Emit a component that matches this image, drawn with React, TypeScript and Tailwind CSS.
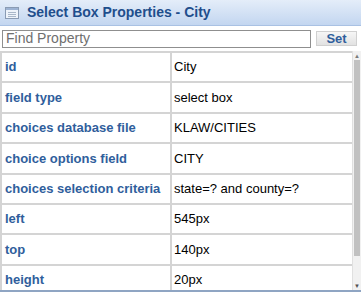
const rows: [string, string][] = [
  ['id', 'City'],
  ['field type', 'select box'],
  ['choices database file', 'KLAW/CITIES'],
  ['choice options field', 'CITY'],
  ['choices selection criteria', 'state=? and county=?'],
  ['left', '545px'],
  ['top', '140px'],
  ['height', '20px'],
]

function FormIcon() {
  return (
    <svg width="14" height="12" viewBox="0 0 14 12" className="shrink-0">
      <rect x="0.5" y="0.5" width="13" height="11" fill="#eef3fa" stroke="#8a9bb3" />
      <rect x="1" y="1" width="12" height="2" fill="#9db3d3" />
      <line x1="3" y1="5.5" x2="11" y2="5.5" stroke="#a9b7c9" />
      <line x1="3" y1="7.5" x2="11" y2="7.5" stroke="#a9b7c9" />
      <line x1="3" y1="9.5" x2="11" y2="9.5" stroke="#a9b7c9" />
    </svg>
  )
}

export default function App() {
  return (
    <div className="w-[361px] h-[292px] overflow-hidden bg-white font-['Liberation_Sans',Arial,sans-serif] flex flex-col">
      <div className="h-[26px] shrink-0 flex items-center gap-2 pl-[5px] bg-gradient-to-b from-[#e4edf9] to-[#c3d6f0] border-b border-[#a9c1e3]">
        <FormIcon />
        <span className="text-[14px] font-bold text-[#1f4e8c]">Select Box Properties - City</span>
      </div>
      <div className="h-[25px] shrink-0 flex items-center gap-[5px] pl-[2px] pr-[4px] bg-white">
        <input
          className="w-[309px] h-[18px] border border-[#8f8f8f] px-[3px] text-[14px] text-gray-800 placeholder:text-[#6f6f6f] outline-none"
          placeholder="Find Property"
        />
        <button className="w-[41px] h-[15px] flex items-center justify-center bg-gradient-to-b from-[#f6f6f6] to-[#e2e2e2] border border-[#d0d0d0] text-[13px] font-bold text-[#2f5e9c] leading-none">
          Set
        </button>
      </div>
      <div className="flex flex-1 min-h-0 border-b-2 border-[#8fa5c3]">
        <div className="flex-1 overflow-hidden border-t-2 border-l-2 border-[#d4d4d4]">
          {rows.map(([k, v]) => (
            <div key={k} className="flex h-[30.4px] border-b-2 border-[#d4d4d4]">
              <div className="w-[170px] shrink-0 flex items-center pl-[3px] border-r-2 border-[#d4d4d4] text-[13px] font-bold text-[#2f5e9c]">
                {k}
              </div>
              <div className="flex-1 flex items-center pl-[2px] text-[13px] text-black">{v}</div>
            </div>
          ))}
        </div>
        <div className="w-[9px] shrink-0 flex flex-col bg-[#f1f1f1] border-l border-[#e0e0e0]">
          <div className="h-[9px] flex items-center justify-center text-[6px] text-[#7a7a7a] leading-none">▲</div>
          <div className="mx-[1px] h-[196px] bg-[#c1c1c1]" />
          <div className="flex-1" />
          <div className="h-[9px] flex items-center justify-center text-[6px] text-[#505050] leading-none">▼</div>
        </div>
      </div>
    </div>
  )
}
